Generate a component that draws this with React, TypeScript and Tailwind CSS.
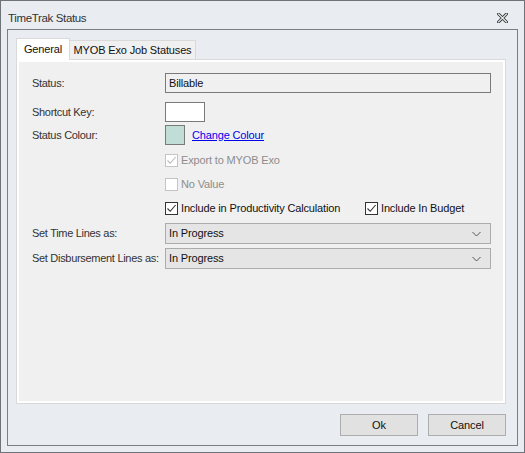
import React from "react";

const F = { fontFamily: '"Liberation Sans", Arial, sans-serif' };

function Check({ checked, disabled }: { checked?: boolean; disabled?: boolean }) {
  return (
    <div
      className={`w-[13px] h-[13px] border ${disabled ? "border-[#c4c4c4]" : "border-[#333333]"} bg-white flex items-center justify-center shrink-0`}
    >
      {checked && (
        <svg width="11" height="11" viewBox="0 0 11 11">
          <path
            d="M1.5 5.5 L4.2 8.3 L9.6 2"
            fill="none"
            stroke={disabled ? "#b8b8b8" : "#333333"}
            strokeWidth="1.1"
          />
        </svg>
      )}
    </div>
  );
}

function Chevron() {
  return (
    <svg width="9" height="6" viewBox="0 0 9 6">
      <path d="M0.5 1 L4.5 5 L8.5 1" fill="none" stroke="#555555" strokeWidth="1" />
    </svg>
  );
}

function Label({ children }: { children: React.ReactNode }) {
  return <div className="w-[133px] shrink-0 text-[#333333] tracking-[-0.3px]">{children}</div>;
}

function Select({ value }: { value: string }) {
  return (
    <div className="w-[326px] h-[21px] border border-[#acacac] bg-[#e5e5e5] flex items-center justify-between pl-[3px] pr-[9px] text-[#111111]">
      <span>{value}</span>
      <Chevron />
    </div>
  );
}

export default function App() {
  return (
    <div
      style={F}
      className="w-[525px] h-[453px] border border-[#6d7379] bg-[#e9ecf0] flex flex-col text-[11px] tracking-[-0.15px]"
    >
      <div className="h-[28px] shrink-0 flex items-start justify-between pl-[7px] pr-[16px] pt-[10px]">
        <span className="text-[11.5px] tracking-[-0.35px] text-[#333333] leading-[14px]">TimeTrak Status</span>
        <svg width="11" height="10" viewBox="0 0 11 10" className="mt-[2px]">
          <path d="M1.5 1 L9.5 9 M9.5 1 L1.5 9" stroke="#3a3a3a" strokeWidth="3" strokeLinecap="square" />
          <path d="M1.5 1 L9.5 9 M9.5 1 L1.5 9" stroke="#e9ecf0" strokeWidth="1.2" strokeLinecap="square" />
        </svg>
      </div>
      <div className="mx-[6px] mb-[6px] flex-1 border border-[#7a7f85] flex flex-col pt-[8px] pl-[8px] pr-[11px] pb-[9px]">
        <div className="h-[21px] flex items-end shrink-0 relative z-10">
          <div className="w-[54px] h-[22px] -mb-[1px] bg-white border border-b-0 border-[#d9d9d9] flex items-center justify-center text-[#111111] pb-[1px]">
            General
          </div>
          <div className="w-[126px] h-[19px] bg-[#f0f0f0] border border-b-0 border-l-0 border-[#d9d9d9] flex items-center justify-center text-[#111111]">
            MYOB Exo Job Statuses
          </div>
        </div>
        <div className="h-[345px] shrink-0 border border-[#d9d9d9] bg-white p-[2px]">
          <div className="h-full bg-[#f0f0f0] flex flex-col pl-[13px] pt-[11px]">
            <div className="flex items-center h-[20px]">
              <Label>Status:</Label>
              <div className="w-[326px] h-[20px] border border-[#7a7a7a] bg-[#f0f0f0] flex items-center pl-[3px] text-[#111111]">
                Billable
              </div>
            </div>
            <div className="flex items-center h-[20px] mt-[9px]">
              <Label>Shortcut Key:</Label>
              <div className="w-[40px] h-[20px] border border-[#7a7a7a] bg-white" />
            </div>
            <div className="flex items-center h-[20px] mt-[3px]">
              <Label>Status Colour:</Label>
              <div className="w-[20px] h-[20px] border border-[#7a7a7a] bg-[#c0ddd6]" />
              <span className="ml-[7px] text-[#0000ee] underline">Change Colour</span>
            </div>
            <div className="flex items-center h-[20px] mt-[5px]">
              <div className="w-[133px] shrink-0" />
              <Check checked disabled />
              <span className="ml-[3px] text-[#8d8d8d]">Export to MYOB Exo</span>
            </div>
            <div className="flex items-center h-[20px] mt-[4px]">
              <div className="w-[133px] shrink-0" />
              <Check disabled />
              <span className="ml-[3px] text-[#8d8d8d]">No Value</span>
            </div>
            <div className="flex items-center h-[20px] mt-[4px]">
              <div className="w-[133px] shrink-0" />
              <div className="w-[200px] flex items-center">
                <Check checked />
                <span className="ml-[3px] text-[#111111]">Include in Productivity Calculation</span>
              </div>
              <Check checked />
              <span className="ml-[3px] text-[#111111]">Include In Budget</span>
            </div>
            <div className="flex items-center mt-[5px]">
              <Label>Set Time Lines as:</Label>
              <Select value="In Progress" />
            </div>
            <div className="flex items-center mt-[4px]">
              <Label>Set Disbursement Lines as:</Label>
              <Select value="In Progress" />
            </div>
          </div>
        </div>
        <div className="mt-[10px] h-[22px] flex justify-end gap-[10px]">
          <div className="w-[78px] h-[22px] border border-[#adadad] bg-[#e1e1e1] flex items-center justify-center text-[#111111]">
            Ok
          </div>
          <div className="w-[78px] h-[22px] border border-[#adadad] bg-[#e1e1e1] flex items-center justify-center text-[#111111]">
            Cancel
          </div>
        </div>
      </div>
    </div>
  );
}
